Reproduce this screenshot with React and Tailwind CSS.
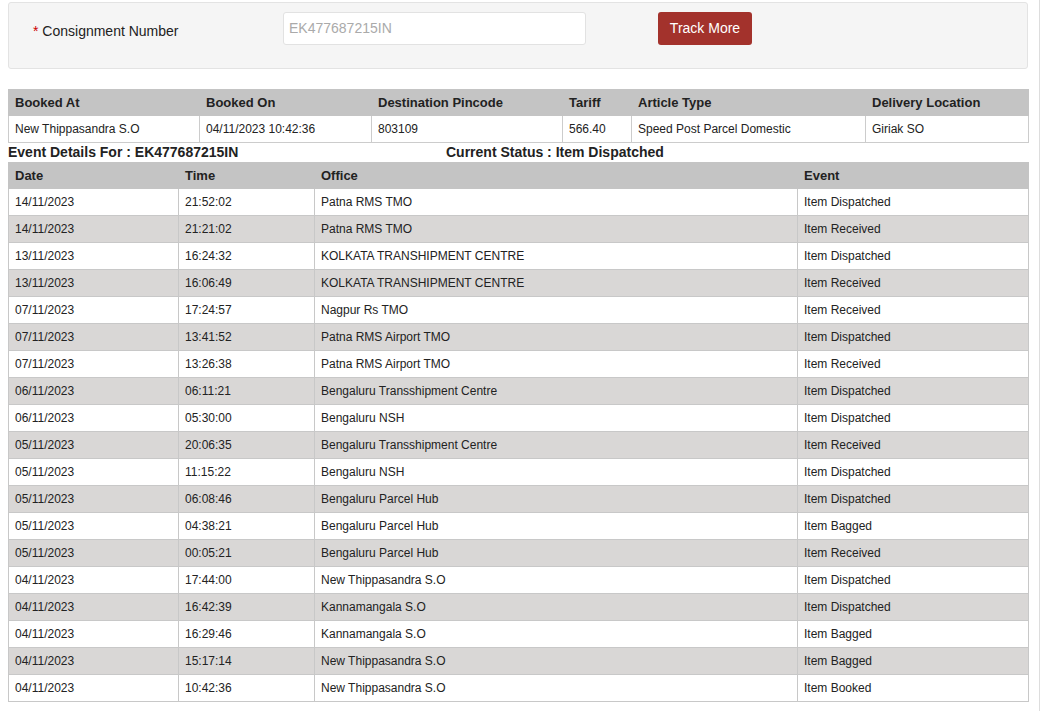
const rows = [
["14/11/2023","21:52:02","Patna RMS TMO","Item Dispatched"],
["14/11/2023","21:21:02","Patna RMS TMO","Item Received"],
["13/11/2023","16:24:32","KOLKATA TRANSHIPMENT CENTRE","Item Dispatched"],
["13/11/2023","16:06:49","KOLKATA TRANSHIPMENT CENTRE","Item Received"],
["07/11/2023","17:24:57","Nagpur Rs TMO","Item Received"],
["07/11/2023","13:41:52","Patna RMS Airport TMO","Item Dispatched"],
["07/11/2023","13:26:38","Patna RMS Airport TMO","Item Received"],
["06/11/2023","06:11:21","Bengaluru Transshipment Centre","Item Dispatched"],
["06/11/2023","05:30:00","Bengaluru NSH","Item Dispatched"],
["05/11/2023","20:06:35","Bengaluru Transshipment Centre","Item Received"],
["05/11/2023","11:15:22","Bengaluru NSH","Item Dispatched"],
["05/11/2023","06:08:46","Bengaluru Parcel Hub","Item Dispatched"],
["05/11/2023","04:38:21","Bengaluru Parcel Hub","Item Bagged"],
["05/11/2023","00:05:21","Bengaluru Parcel Hub","Item Received"],
["04/11/2023","17:44:00","New Thippasandra S.O","Item Dispatched"],
["04/11/2023","16:42:39","Kannamangala S.O","Item Dispatched"],
["04/11/2023","16:29:46","Kannamangala S.O","Item Bagged"],
["04/11/2023","15:17:14","New Thippasandra S.O","Item Bagged"],
["04/11/2023","10:42:36","New Thippasandra S.O","Item Booked"],
];
const ecols = [170,136,483,231];
const bcols = [191,172,191,69,234,163];
export default function App(){
  return (
    <div className="w-[1050px] h-[711px] bg-white relative overflow-hidden text-[#222]" style={{fontFamily:'"Liberation Sans", Arial, sans-serif'}}>
      <div className="absolute top-0 bottom-0 left-[1039px] w-px bg-[#ddd]"></div>
      <div className="ml-2 w-[1020px] mt-[2px] h-[67px] bg-[#f5f5f5] border border-[#e3e3e3] rounded-[3px] flex items-start pt-[9px]">
        <div className="ml-6 mt-[9px] w-[250px] text-[14px]"><span className="text-[#c00]">*</span> Consignment Number</div>
        <div className="w-[303px] h-[33px] bg-white border border-[#e2e2e2] rounded-[3px] px-[5px] flex items-center text-[14px] text-[#aaa]">EK477687215IN</div>
        <div className="ml-[72px] w-[94px] h-[33px] bg-[#a3322c] rounded-[3px] text-white text-[14px] flex items-center justify-center">Track More</div>
      </div>
      <table className="ml-2 mt-5 w-[1020px] border-collapse table-fixed text-[12px]">
        <colgroup>{bcols.map((w,i)=><col key={i} style={{width:w}}/>)}</colgroup>
        <thead><tr className="bg-[#c4c4c4] h-[26px]">
          {["Booked At","Booked On","Destination Pincode","Tariff","Article Type","Delivery Location"].map(h=><th key={h} className="text-left font-bold text-[13px] px-[6px] border border-[#c4c4c4]">{h}</th>)}
        </tr></thead>
        <tbody><tr className="h-[27px]">
          {["New Thippasandra S.O","04/11/2023 10:42:36","803109","566.40","Speed Post Parcel Domestic","Giriak SO"].map((c,i)=><td key={i} className="px-[6px] border border-[#ccc]">{c}</td>)}
        </tr></tbody>
      </table>
      <div className="ml-2 h-[19px] flex items-center text-[14px] font-bold">
        <div className="w-[438px]">Event Details For : EK477687215IN</div>
        <div>Current Status : Item Dispatched</div>
      </div>
      <table className="ml-2 w-[1020px] border-collapse table-fixed text-[12px]">
        <colgroup>{ecols.map((w,i)=><col key={i} style={{width:w}}/>)}</colgroup>
        <thead><tr className="bg-[#c4c4c4] h-[26px]">
          {["Date","Time","Office","Event"].map(h=><th key={h} className="text-left font-bold text-[13px] px-[6px] border border-[#c4c4c4]">{h}</th>)}
        </tr></thead>
        <tbody>{rows.map((r,i)=>(
          <tr key={i} className={(i%2 ? "bg-[#d9d7d6]" : "bg-white")+" h-[27px]"}>
            {r.map((c,j)=><td key={j} className="px-[6px] border border-[#c8c8c8]">{c}</td>)}
          </tr>))}
        </tbody>
      </table>
    </div>
  );
}
